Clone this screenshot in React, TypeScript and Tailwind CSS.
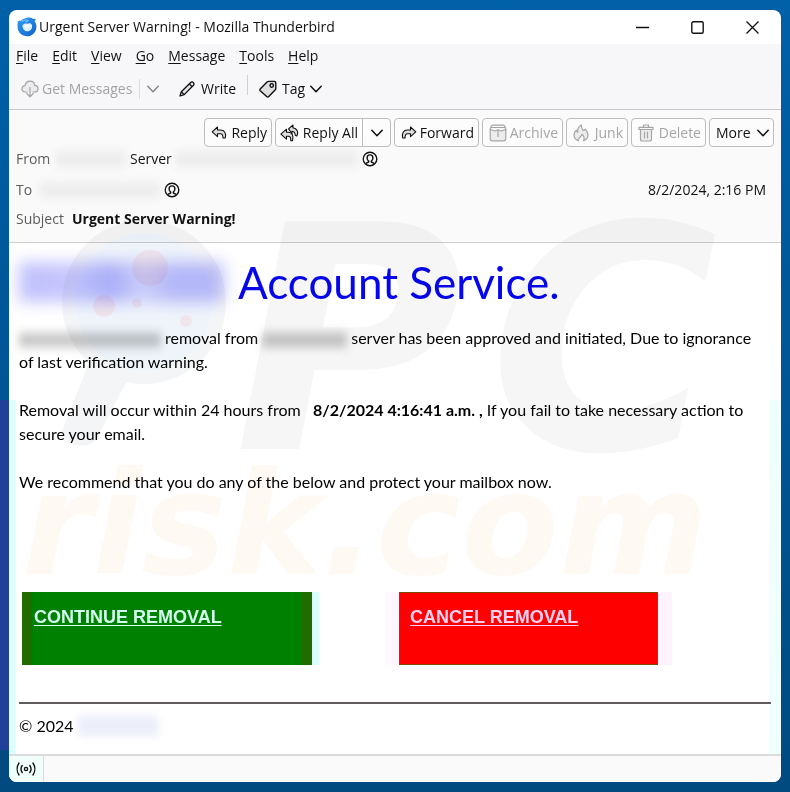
import type { ReactNode } from 'react';

const MENU_ITEMS = ['File', 'Edit', 'View', 'Go', 'Message', 'Tools', 'Help'];

const ThunderbirdLogo = () => (
  <svg className="h-5 w-5 shrink-0" viewBox="0 0 20 20">
    <defs>
      <linearGradient id="bird" x1="0" y1="0" x2="1" y2="1">
        <stop offset="0" stopColor="#2f9df0" />
        <stop offset="1" stopColor="#1160cf" />
      </linearGradient>
    </defs>
    <path
      d="M.8 4.500L3 3.200L3.600 4.200C5 2.300 6.500 1.500 8 1.400C10.300 .2 14 .2 15.800 1.700L19 2.100L17.600 4.200C19.200 6 19.800 8.500 19.300 11.200C18.500 16 14.700 19.300 10.200 19.300C5 19.300 .8 15.500 .6 10.300C.3 8.200 .4 6.500 .8 4.500Z"
      fill="url(#bird)"
    />
    <path d="M5.500 8.200C7 6.800 8.500 6.300 10.200 6.800C12.500 5.800 14.300 6.300 15 8.200C15.600 11.500 13.500 14.300 10.600 14.300C7.500 14.300 5.300 11.800 5.500 8.200Z" fill="#d9eeff" />
    <path d="M6.500 9C8 11.500 9.500 11.800 10.600 11.300C12 11 13.300 10 14 8.500L10.500 7.300Z" fill="#f4faff" />
    <path d="M4.500 5C6.200 3 9 2.700 11.500 3.600L8.300 5.200" fill="none" stroke="#7ccbff" strokeWidth="1" />
  </svg>
);

const Chevron = () => (
  <svg className="h-2 w-3 shrink-0" viewBox="0 0 12 8" fill="none" stroke="currentColor" strokeWidth="1.500" strokeLinecap="round" strokeLinejoin="round">
    <path d="M.8 1.200L6 6.800L11.200 1.200" />
  </svg>
);

const CloudIcon = () => (
  <svg className="h-[18px] w-[18px] shrink-0" viewBox="0 0 18 18" fill="none" stroke="currentColor" strokeWidth="1.200" strokeLinecap="round" strokeLinejoin="round">
    <path d="M6 12H4.500C2.300 12 1 10.500 1 8.800C1 7 2.400 5.600 4 5.600C4.600 2.800 6.500 1.200 9 1.200C11.800 1.200 13.500 3 13.800 5.400C15.800 5.400 17 6.900 17 8.700C17 10.600 15.600 12 13.700 12H12" fill="#ececee" />
    <path d="M9 7.500V16.500M5.800 13.500L9 16.800L12.200 13.500" />
  </svg>
);

const PencilIcon = () => (
  <svg className="h-4 w-4 shrink-0" viewBox="0 0 16 16" fill="none" stroke="currentColor" strokeWidth="1.300" strokeLinejoin="round">
    <path d="M1 15L2.300 10.800L11.700 1.500C12.500 .7 13.600 .8 14.400 1.600C15.200 2.400 15.200 3.500 14.500 4.200L5.200 13.600Z" fill="#e4e4e6" />
    <path d="M10.300 2.900L13.100 5.700M2.300 10.800L5.200 13.600" />
  </svg>
);

const TagIcon = () => (
  <svg className="h-[18px] w-[18px] shrink-0" viewBox="0 0 18 18" fill="none" stroke="currentColor" strokeWidth="1.400" strokeLinejoin="round">
    <path d="M1.200 9L8 2.100C8.500 1.600 9 1.400 9.700 1.400H15.200C16.200 1.400 16.800 2 16.800 3V8.300C16.800 9 16.600 9.500 16.100 10.100L9.800 16.600C9.200 17.200 8.300 17.200 7.700 16.600L1.200 10.800C.7 10.300 .7 9.500 1.200 9Z" fill="#dededf" />
    <circle cx="12.700" cy="5.500" r="1.700" fill="#f7f7f9" />
  </svg>
);

const ARROW = 'M6.500 1L1.200 5.800L6.500 10.600V7.800H9.500C11.300 7.800 12 9.300 12 12H14.300C15.400 7.200 13.500 4 9.500 4H6.500Z';

const ReplyIcon = () => (
  <svg className="h-[13px] w-4 shrink-0" viewBox="0 0 16 13" fill="#ddd" stroke="currentColor" strokeWidth="1.100" strokeLinejoin="round">
    <path d={ARROW} />
  </svg>
);

const ForwardIcon = () => (
  <svg className="h-[13px] w-4 shrink-0" viewBox="0 0 16 13" fill="#ddd" stroke="currentColor" strokeWidth="1.100" strokeLinejoin="round">
    <path d={ARROW} transform="matrix(-1 0 0 1 16 0)" />
  </svg>
);

const ReplyAllIcon = () => (
  <svg className="h-[18px] w-[19px] shrink-0" viewBox="0 0 19 18" fill="#ddd" stroke="currentColor" strokeWidth="1.100" strokeLinejoin="round">
    <path d="M13 1L8.500 4.800L12 9.500V7.200C14.300 7.500 15.300 8.500 15.300 11.500L16.900 12C18.800 8 17.300 4.500 12.900 3.800Z" />
    <path d="M6.500 5.200L.9 10.200L6.500 15.200V12.300H8.300C10.300 12.300 11 13.500 10.700 16.600L12.500 16.800C13.900 12 12.200 8.500 8.500 8.300H6.500Z" />
  </svg>
);

const ArchiveIcon = () => (
  <svg className="h-[18px] w-[18px] shrink-0" viewBox="0 0 18 18" fill="none" stroke="currentColor" strokeWidth="1.200" strokeLinejoin="round">
    <path d="M1.200 5.500V14.500C1.200 16 2 16.800 3.500 16.800H14.500C16 16.800 16.800 16 16.800 14.500V5.500" fill="#ececec" />
    <path d="M1.200 5.500L2 2.700C2.300 1.600 3 1.200 4 1.200H14C15 1.200 15.700 1.600 16 2.700L16.800 5.500L12 7L9 5.800L6 7Z" fill="#fafafa" />
    <path d="M2 3.500H16M9 5.800V13" />
  </svg>
);

const JunkIcon = () => (
  <svg className="h-[18px] w-4 shrink-0" viewBox="0 0 16 18" fill="none" stroke="currentColor" strokeWidth="1.200" strokeLinejoin="round" strokeLinecap="round">
    <path d="M5.500 16.600C2.800 15.800 1 13.600 1 10.800C1 8.700 2 7.300 3.200 6.200C3.500 7.400 4 8 4.700 8.300C4.300 5.500 5.500 2.700 8.300 1C8.200 3.700 9 5 10.300 6.700L12.300 5.200C13.800 7 15 8.800 15 11C15 13.700 13.200 15.800 10.500 16.600C12 14.200 11.200 12.500 9.300 10.300C8.300 12.800 5 13.500 5.500 16.600Z" fill="#ececec" />
  </svg>
);

const TrashIcon = () => (
  <svg className="h-[18px] w-4 shrink-0" viewBox="0 0 16 18" fill="none" stroke="currentColor" strokeWidth="1.200" strokeLinejoin="round" strokeLinecap="round">
    <path d="M2.500 5.500V15C2.500 16.200 3.200 17 4.500 17H11.500C12.800 17 13.500 16.200 13.500 15V5.500" fill="#ececec" />
    <path d="M1 3.300H15V5.500H1ZM5.500 3V1H10.500V3M6.500 8V14M9.500 8V14" />
  </svg>
);

const PersonIcon = () => (
  <svg className="h-4 w-4 shrink-0" viewBox="0 0 16 16" fill="none" stroke="#111" strokeWidth="1.400" strokeLinecap="round" strokeLinejoin="round">
    <circle cx="8" cy="8" r="6.800" />
    <path d="M4.300 12.200L6.700 11V10C5.400 9 5.100 8 5.100 6.900C5.100 5 6.300 3.900 8 3.900S10.900 5 10.900 6.900C10.900 8 10.600 9 9.300 10V11L11.700 12.200" />
  </svg>
);

const SignalIcon = () => (
  <svg className="h-[14px] w-5" viewBox="0 0 20 14" fill="none" stroke="#111" strokeWidth="1.400" strokeLinecap="round">
    <circle cx="10" cy="7" r="1.600" />
    <path d="M6.200 3.500C4.800 5.500 4.800 8.500 6.200 10.500M13.800 3.500C15.200 5.500 15.200 8.500 13.800 10.500M3 1C.6 4.500 .6 9.500 3 13M17 1C19.400 4.500 19.400 9.500 17 13" />
  </svg>
);

const Watermark = () => (
  <svg className="pointer-events-none absolute top-0 left-0 h-[772px] w-[772px] mix-blend-multiply" viewBox="0 0 772 772" aria-hidden="true">
    {/* Magnifier */}
    <g opacity="0.050" fill="#345">
      <path d="M80 353L118 371L88 428C82 442 48 436 54 418Z" />
      <path d="M135 210A82 82 0 1 0 135 374A82 82 0 1 0 135 210ZM135 223A69 69 0 1 1 135 361A69 69 0 1 1 135 223Z" fillRule="evenodd" />
    </g>
    <circle cx="135" cy="292" r="69" fill="#eff4fb" />
    <g fill="#ff5040" opacity="0.080">
      <circle cx="141" cy="258" r="18" />
      <circle cx="95" cy="296" r="11" />
      <circle cx="128" cy="293" r="5" />
      <circle cx="177" cy="311" r="6" />
    </g>
    <g fontFamily="DejaVu Sans" fontWeight="bold" fontStyle="italic">
      <g fill="#000" opacity="0.035" fontSize="312">
        <text x="225" y="439">P</text>
        <text x="480" y="439">C</text>
      </g>
      <text x="13" y="564" fill="#f08020" opacity="0.050" fontSize="143">risk.com</text>
    </g>
  </svg>
);

type ActionProps = { width: string; disabled?: boolean; children: ReactNode };

function Action({ width, disabled, children }: ActionProps) {
  return (
    <button
      disabled={disabled}
      className={`flex h-[29px] items-center justify-between rounded border border-[#bdbdbd] bg-[#fcfcfc] pr-1 pl-[6px] whitespace-nowrap disabled:text-[#a5a5a5] ${width}`}
    >
      {children}
    </button>
  );
}

export default function App() {
  return (
    <div className="flex min-h-screen bg-[linear-gradient(#21409a,#21409a),linear-gradient(#0060a8,#004a80)] bg-[size:9px_350px,auto] bg-[position:0_400px,0_0] bg-no-repeat px-[9px] py-[10px] font-['Open_Sans',sans-serif] text-sm text-[#111]">
      <div className="relative flex min-w-0 flex-1 flex-col overflow-hidden rounded-lg bg-white">
        {/* Title bar */}
        <header className="flex h-[34px] items-center pr-[22px] pl-2">
          <ThunderbirdLogo />
          <h1 className="ml-0.5">Urgent Server Warning! - Mozilla Thunderbird</h1>
          <div className="ml-auto flex gap-[42px]">
            <button aria-label="Minimize">
              <svg className="h-[13px] w-[13px]" viewBox="0 0 13 13" stroke="#111" strokeWidth="1.300"><path d="M0 6.500H13" /></svg>
            </button>
            <button aria-label="Maximize">
              <svg className="h-[13px] w-[13px]" viewBox="0 0 13 13" fill="none" stroke="#111" strokeWidth="1.400"><rect x=".8" y=".8" width="11.400" height="11.400" rx="1.500" /></svg>
            </button>
            <button aria-label="Close">
              <svg className="h-[13px] w-[13px]" viewBox="0 0 13 13" stroke="#111" strokeWidth="1.300"><path d="M.5 .5L12.500 12.500M12.500 .5L.5 12.500" /></svg>
            </button>
          </div>
        </header>

        {/* Menu and toolbar */}
        <div className="border-b border-[#c6c6c8] bg-[#f7f7f9]">
          <nav className="flex h-6 items-center gap-[14px] pl-[7px]">
            {MENU_ITEMS.map((item) => (
              <button key={item}>
                <span className="underline underline-offset-2">{item[0]}</span>
                {item.slice(1)}
              </button>
            ))}
          </nav>
          <div className="flex h-[41px] items-center pl-3">
            <button disabled className="flex w-[110px] items-center gap-[3px] whitespace-nowrap text-[#a3a3a5]">
              <CloudIcon />
              Get Messages
            </button>
            <button disabled aria-label="Get messages options" className="ml-2 flex h-5 items-center border-l border-[#dcdcde] pl-[7px] text-[#8a8a8c]">
              <Chevron />
            </button>
            <button className="ml-5 flex items-center gap-[6px]">
              <PencilIcon />
              Write
            </button>
            <div className="mx-[11px] mb-2 h-5 w-px bg-[#d0d0d2]" />
            <button className="flex items-center gap-[5px]">
              <TagIcon />
              Tag
              <Chevron />
            </button>
          </div>
        </div>

        {/* Message header */}
        <section className="border-b border-[#cfcfd1] bg-[#fafafa] pt-2 pb-[13px]">
          <div className="flex justify-end gap-[3px] pr-[7px]">
            <Action width="w-[68px]"><ReplyIcon />Reply</Action>
            <div className="flex h-[29px] w-[116px] rounded border border-[#bdbdbd] bg-[#fcfcfc]">
              <button className="flex flex-1 items-center justify-between px-1 whitespace-nowrap"><ReplyAllIcon />Reply All</button>
              <button aria-label="More reply options" className="flex w-7 items-center justify-center border-l border-[#bdbdbd]"><Chevron /></button>
            </div>
            <Action width="w-[85px]"><ForwardIcon />Forward</Action>
            <Action width="w-[81px]" disabled><ArchiveIcon />Archive</Action>
            <Action width="w-[62px]" disabled><JunkIcon />Junk</Action>
            <Action width="w-[75px]" disabled><TrashIcon />Delete</Action>
            <Action width="w-[65px]">More<Chevron /></Action>
          </div>
          <div className="flex h-6 items-center pl-[7px]">
            <span className="w-10 text-[#5c5c5e]">From</span>
            <span className="h-4 w-[70px] bg-[#ececec] blur-xs" />
            <span className="ml-1">Server</span>
            <span className="mx-1 h-4 w-[182px] bg-[#ececec] blur-xs" />
            <PersonIcon />
          </div>
          <div className="flex h-[38px] items-center pr-[15px] pl-[7px]">
            <span className="w-6 text-[#5c5c5e]">To</span>
            <span className="mr-1 h-4 w-[120px] bg-[#ececec] blur-xs" />
            <PersonIcon />
            <span className="ml-auto">8/2/2024, 2:16 PM</span>
          </div>
          <div className="flex h-5 items-center pl-[7px]">
            <span className="w-14 text-[#5c5c5e]">Subject</span>
            <span className="font-bold">Urgent Server Warning!</span>
          </div>
        </section>

        {/* Message body */}
        <main className="flex-1 bg-[linear-gradient(90deg,#dcffff_7px,transparent_7px,transparent_calc(100%-12px),#effffd_calc(100%-12px))] bg-[position:0_157px] bg-no-repeat px-[10px] font-['Lato',sans-serif] text-base leading-6 text-black">
          <h2 className="flex h-[78px] items-center gap-[14px] text-[44px] text-[#0505ee]">
            <span className="h-10 w-[205px] bg-[linear-gradient(90deg,#c0c0fc,#c8c8fd_30%,#b4b4fb_45%,#d8d8fe_60%,#c0c0fc_75%,#c0c0fc)] blur-sm" />
            Account Service.
          </h2>
          <p className="mt-[5px] pr-2">
            <span className="mr-1 inline-block h-5 w-[142px] bg-[linear-gradient(#f0f0f0,#bdbdbd,#f0f0f0)] align-middle blur-xs" />
            removal from
            <span className="mx-1 inline-block h-5 w-[85px] bg-[linear-gradient(#f0f0f0,#bdbdbd,#f0f0f0)] align-middle blur-xs" />
            server has been approved and initiated, Due to ignorance of last verification warning.
          </p>
          <p className="mt-6">
            Removal will occur within 24 hours from &nbsp; <b>8/2/2024 4:16:41 a.m. ,</b> If you fail to take necessary action to secure your email.
          </p>
          <p className="mt-6">We recommend that you do any of the below and protect your mailbox now.</p>

          <div className="mt-[98px] ml-[3px] flex gap-[87px] font-['Liberation_Sans',sans-serif] text-lg font-bold">
            <a href="#continue" className="h-[73px] w-[290px] border-x-[10px] border-[#226b00] bg-[#008000] px-0.5 pt-[11px] text-[#d4ffee] underline underline-offset-2 shadow-[7px_0_#d9ffff]">
              CONTINUE REMOVAL
            </a>
            <a href="#cancel" className="h-[73px] w-[259px] border border-[#7a4a00] bg-[#ff0000] px-[10px] pt-[10px] text-[#ffd0f0] underline underline-offset-2 shadow-[14px_0_#fff3ff,-14px_0_#fff6ff]">
              CANCEL REMOVAL
            </a>
          </div>

          <hr className="mt-[37px] border-t-2 border-[#605c60]" />
          <p className="mt-[10px] flex items-center">
            © 2024
            <span className="ml-1 h-5 w-20 bg-[#ebedfa] blur-xs" />
          </p>
        </main>

        {/* Status bar */}
        <footer className="flex h-7 border-t-2 border-[#dcdcdc] bg-[#fafafa]">
          <button aria-label="Connection status" className="flex w-[35px] items-center justify-center border-r border-[#dcdcdc] bg-[#f1fffc]">
            <SignalIcon />
          </button>
        </footer>

        <Watermark />
      </div>
    </div>
  );
}
